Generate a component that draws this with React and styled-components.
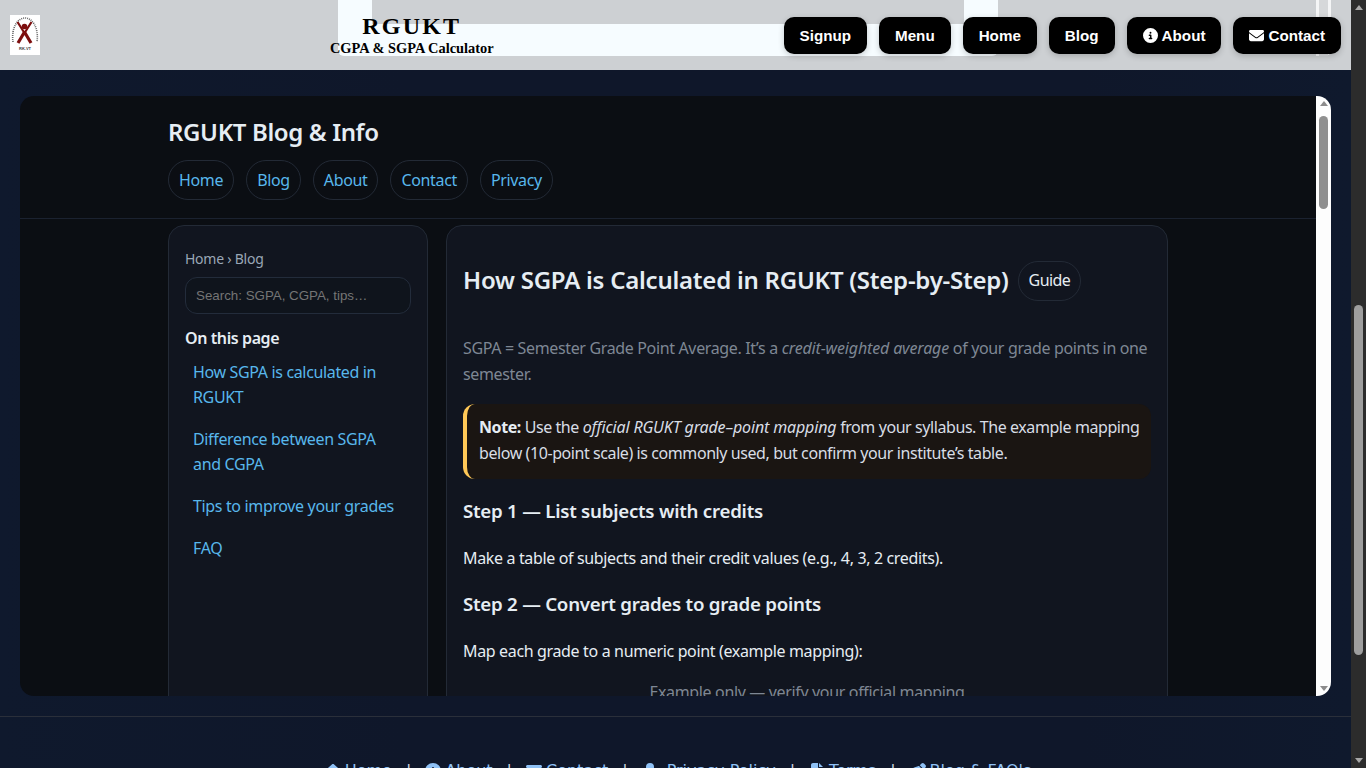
import React from "react";
import styled, { createGlobalStyle } from "styled-components";
import { FaCircleInfo, FaEnvelope, FaHouse, FaUser, FaFileLines, FaPenNib } from "react-icons/fa6";

const GlobalStyle = createGlobalStyle`
  html, body {
    margin: 0;
    padding: 0;
    height: 100%;
    overflow: hidden;
    background: #0f172a;
  }
  * { box-sizing: border-box; }
`;

const body = `"Noto Sans", "Open Sans", sans-serif`;

const Page = styled.div`
  display: flex;
  width: 1366px;
  height: 768px;
  overflow: hidden;
`;

const Main = styled.div`
  flex: 1;
  min-width: 0;
  display: flex;
  flex-direction: column;
  background: linear-gradient(90deg, #0f192d 0%, #0f172a 30%, #0f172a 80%, #0f192d 100%);
`;

const Header = styled.header`
  position: relative;
  flex: 0 0 70px;
  display: flex;
  align-items: center;
  justify-content: space-between;
  padding: 0 10px;
  background: #cdd0d3;
  overflow: hidden;
`;

const BehindSheet = styled.div`
  position: absolute;
  left: 338px;
  top: -20px;
  width: 660px;
  height: 76px;
  background: #f6fcff;
  border-radius: 0 0 6px 6px;
  &::after {
    content: "";
    position: absolute;
    left: 34px;
    top: 0;
    width: 592px;
    height: 44px;
    background: #cdd0d3;
  }
`;

const BehindBar = styled.div`
  position: absolute;
  left: 1316px;
  top: 0;
  width: 15px;
  height: 56px;
  background: #f4f5f6;
  border-radius: 0 0 6px 0;
  &::after {
    content: "";
    position: absolute;
    left: 3px;
    top: 0;
    width: 9px;
    height: 100%;
    background: #d6d8da;
  }
`;

const LogoBox = styled.div`
  position: relative;
  width: 30px;
  height: 40px;
  background: #fff;
  display: flex;
`;

const Brand = styled.div`
  position: relative;
  text-align: center;
  color: #000;
  font-family: "Liberation Serif", serif;
  font-weight: 700;
`;

const BrandName = styled.div`
  font-size: 24px;
  line-height: 27px;
  letter-spacing: 2.2px;
`;

const BrandSub = styled.div`
  font-size: 14.4px;
  line-height: 17px;
`;

const TopNav = styled.nav`
  position: relative;
  display: flex;
  gap: 12px;
`;

const TopButton = styled.a`
  display: flex;
  align-items: center;
  gap: 4px;
  height: 37px;
  padding: 0 16px;
  background: #000;
  color: #fff;
  border-radius: 10px;
  font-family: "Liberation Sans", Arial, sans-serif;
  font-size: 15.2px;
  font-weight: 700;
  box-shadow: 0 2px 6px rgba(0, 0, 0, 0.2);
`;

const Panel = styled.div`
  flex: 0 0 600px;
  display: flex;
  margin: 26px 20px 20px;
  border-radius: 14px;
  overflow: hidden;
`;

const Frame = styled.div`
  flex: 1;
  min-width: 0;
  overflow: hidden;
  background: #0b0e13;
  color: #e6edf3;
  font-family: ${body};
  letter-spacing: -0.35px;
  em { letter-spacing: -0.15px; }
`;

const FrameHead = styled.div`
  height: 123px;
  padding-top: 19px;
  border-bottom: 1px solid #1b2230;
`;

const Wrap = styled.div`
  width: 1000px;
  margin: 0 auto;
`;

const FrameTitle = styled.h1`
  margin: 0 0 11px;
  font-size: 24px;
  line-height: 34px;
  font-weight: 600;
  letter-spacing: -0.37px;
  color: #e6edf3;
`;

const Pills = styled.div`
  display: flex;
  gap: 12px;
`;

const Pill = styled.a`
  display: flex;
  align-items: center;
  height: 40px;
  padding: 0 10px;
  border: 1px solid #232a36;
  border-radius: 20px;
  color: #58b7ec;
  font-size: 16px;
`;

const Columns = styled.div`
  display: grid;
  grid-template-columns: 260px 722px;
  gap: 18px;
  margin-top: 6px;
`;

const Card = styled.div`
  background: #11151f;
  border: 1px solid #232a36;
  border-radius: 16px;
  height: 600px;
`;

const Side = styled(Card)`
  padding: 23px 16px;
`;

const Crumb = styled.div`
  font-size: 14px;
  line-height: 20px;
  letter-spacing: -0.25px;
  color: #9aa7b6;
  margin-bottom: 8px;
`;

const Search = styled.input`
  display: block;
  width: 100%;
  height: 37px;
  padding: 0 10px;
  background: #0f141c;
  border: 1px solid #232c3b;
  border-radius: 12px;
  font-family: "Liberation Sans", Arial, sans-serif;
  font-size: 13.33px;
  color: #e6edf3;
  &::placeholder { color: #757575; opacity: 1; }
`;

const SideTitle = styled.div`
  margin-top: 13px;
  font-size: 16px;
  line-height: 22px;
  font-weight: 600;
  letter-spacing: -0.4px;
  color: #e6edf3;
`;

const Toc = styled.ul`
  list-style: none;
  margin: 11px 0 0;
  padding: 0 12px 0 8px;
  display: flex;
  flex-direction: column;
  gap: 17px;
`;

const TocLink = styled.li`
  font-size: 16px;
  line-height: 25px;
  color: #58b7ec;
`;

const Article = styled(Card)`
  padding: 35px 16px 0;
  overflow: hidden;
`;

const HeadRow = styled.div`
  display: flex;
  align-items: center;
  gap: 9px;
`;

const ArticleTitle = styled.h2`
  margin: 0 0 2px;
  font-size: 24px;
  line-height: 38px;
  font-weight: 600;
  letter-spacing: -0.24px;
  color: #e6edf3;
`;

const Tag = styled.span`
  display: flex;
  align-items: center;
  height: 40px;
  padding: 0 10px 2px;
  border: 1px solid #232a36;
  border-radius: 20px;
  font-size: 16px;
  letter-spacing: -0.6px;
  color: #e6edf3;
`;

const Lead = styled.p`
  margin: 34px 0 0;
  font-size: 16px;
  line-height: 26px;
  color: #7e8794;
`;

const Note = styled.div`
  margin-top: 17px;
  padding: 10px 8px 13px 12px;
  background: #1a1512;
  border-left: 4px solid #ffc857;
  border-radius: 12px;
  font-size: 16px;
  line-height: 26px;
  letter-spacing: -0.42px;
  color: #d8dde5;
  b { font-weight: 700; color: #e6edf3; }
`;

const StepTitle = styled.h3`
  margin: 18px 0 0;
  font-size: 18.7px;
  line-height: 28px;
  font-weight: 600;
  letter-spacing: -0.25px;
  color: #e6edf3;
`;

const Para = styled.p`
  margin: 20px 0 ${(p) => p.$after}px;
  font-size: 16px;
  line-height: 26px;
  color: #e6edf3;
`;

const Caption = styled.div`
  text-align: center;
  font-size: 16px;
  line-height: 26px;
  color: #7e8794;
`;

const InnerBar = styled.div`
  position: relative;
  flex: 0 0 15px;
  background: #fdfdfd;
  display: flex;
  flex-direction: column;
  align-items: center;
`;

const OuterBar = styled.div`
  flex: 0 0 15px;
  height: 768px;
  background: #2c2c2c;
  display: flex;
  flex-direction: column;
  align-items: center;
`;

const Arrow = styled.div`
  flex: 0 0 15px;
  display: flex;
  align-items: center;
  justify-content: center;
  &::before {
    content: "";
    border-left: 4px solid transparent;
    border-right: 4px solid transparent;
    ${(p) => (p.$down ? "border-top" : "border-bottom")}: 5px solid ${(p) => p.$color};
  }
`;

const Thumb = styled.div`
  width: ${(p) => p.$w}px;
  height: ${(p) => p.$h}px;
  margin-top: ${(p) => p.$top}px;
  background: ${(p) => p.$color};
  border-radius: 5px;
`;

const Spacer = styled.div`
  flex: 1;
`;

const FootRule = styled.div`
  flex: 0 0 1px;
  background: #2a2f3a;
`;

const Footer = styled.footer`
  display: flex;
  justify-content: center;
  align-items: center;
  padding: 42px 0 0 5px;
  color: #e6edf3;
  font-family: "DejaVu Sans", sans-serif;
  font-size: 16px;
  line-height: 24px;
`;

const FootLink = styled.a`
  display: flex;
  align-items: center;
  gap: ${(p) => (p.$wide ? 9 : 4)}px;
  color: #8fc1f5;
`;

const FootSep = styled.span`
  margin: 0 14px;
  color: #cfd6e0;
`;

const topLinks = [
  { label: "Signup" },
  { label: "Menu" },
  { label: "Home" },
  { label: "Blog" },
  { label: "About", icon: <FaCircleInfo size={15} /> },
  { label: "Contact", icon: <FaEnvelope size={15} /> },
];

const pills = ["Home", "Blog", "About", "Contact", "Privacy"];

const toc = [
  "How SGPA is calculated in RGUKT",
  "Difference between SGPA and CGPA",
  "Tips to improve your grades",
  "FAQ",
];

const footLinks = [
  { label: "Home", icon: <FaHouse /> },
  { label: "About", icon: <FaCircleInfo /> },
  { label: "Contact", icon: <FaEnvelope /> },
  { label: "Privacy Policy", icon: <FaUser />, wide: true },
  { label: "Terms", icon: <FaFileLines /> },
  { label: "Blog & FAQ's", icon: <FaPenNib /> },
];

const Logo = () => (
  <svg width="30" height="40" viewBox="0 0 30 40">
    <path d="M3 27 C1 12 8 3 15 3 C22 3 29 12 27 27" fill="none" stroke="#666" strokeWidth="1.6" strokeDasharray="1 1" />
    <circle cx="14.5" cy="11.5" r="2.8" fill="#7d0f0f" />
    <path d="M7.5 7 L14.5 18 L21.5 7" fill="none" stroke="#7d0f0f" strokeWidth="2.2" />
    <path d="M14.5 17 L8 28 M14.5 17 L21 28" fill="none" stroke="#7d0f0f" strokeWidth="3.2" />
    <text x="15" y="34.5" textAnchor="middle" fontSize="4" fontWeight="700" fontFamily="Liberation Sans, sans-serif" fill="#444">RK.VT</text>
  </svg>
);

const App = () => {
  return (
    <Page>
      <GlobalStyle />
      <Main>
        <Header>
          <BehindSheet />
          <BehindBar />
          <LogoBox>
            <Logo />
          </LogoBox>
          <Brand>
            <BrandName>RGUKT</BrandName>
            <BrandSub>CGPA &amp; SGPA Calculator</BrandSub>
          </Brand>
          <TopNav>
            {topLinks.map((l) => (
              <TopButton key={l.label}>
                {l.icon}
                {l.label}
              </TopButton>
            ))}
          </TopNav>
        </Header>
        <Panel>
          <Frame>
            <FrameHead>
              <Wrap>
                <FrameTitle>RGUKT Blog &amp; Info</FrameTitle>
                <Pills>
                  {pills.map((p) => (
                    <Pill key={p}>{p}</Pill>
                  ))}
                </Pills>
              </Wrap>
            </FrameHead>
            <Wrap>
              <Columns>
                <Side>
                  <Crumb>Home › Blog</Crumb>
                  <Search placeholder="Search: SGPA, CGPA, tips…" />
                  <SideTitle>On this page</SideTitle>
                  <Toc>
                    {toc.map((t) => (
                      <TocLink key={t}>{t}</TocLink>
                    ))}
                  </Toc>
                </Side>
                <Article>
                  <HeadRow>
                    <ArticleTitle>How SGPA is Calculated in RGUKT (Step-by-Step)</ArticleTitle>
                    <Tag>Guide</Tag>
                  </HeadRow>
                  <Lead>
                    SGPA = Semester Grade Point Average. It’s a <em>credit-weighted average</em> of your grade points in one semester.
                  </Lead>
                  <Note>
                    <b>Note:</b> Use the <em>official RGUKT grade–point mapping</em> from your syllabus. The example mapping below (10-point scale) is commonly used, but confirm your institute’s table.
                  </Note>
                  <StepTitle>Step 1 — List subjects with credits</StepTitle>
                  <Para $after={19}>Make a table of subjects and their credit values (e.g., 4, 3, 2 credits).</Para>
                  <StepTitle>Step 2 — Convert grades to grade points</StepTitle>
                  <Para $after={15}>Map each grade to a numeric point (example mapping):</Para>
                  <Caption>Example only — verify your official mapping</Caption>
                </Article>
              </Columns>
            </Wrap>
          </Frame>
          <InnerBar>
            <Arrow $color="#8c8c8c" />
            <Thumb $w={9} $h={93} $top={5} $color="#8f8f8f" />
            <Spacer />
            <Arrow $down $color="#8c8c8c" />
          </InnerBar>
        </Panel>
        <FootRule />
        <Footer>
          {footLinks.map((l, i) => (
            <React.Fragment key={l.label}>
              {i > 0 && <FootSep>|</FootSep>}
              <FootLink $wide={l.wide}>
                {l.icon}
                {l.label}
              </FootLink>
            </React.Fragment>
          ))}
        </Footer>
      </Main>
      <OuterBar>
        <Arrow $color="#a8a8a8" />
        <Thumb $w={9} $h={350} $top={290} $color="#9e9e9e" />
        <Spacer />
        <Arrow $down $color="#a8a8a8" />
      </OuterBar>
    </Page>
  );
};

export default App;
